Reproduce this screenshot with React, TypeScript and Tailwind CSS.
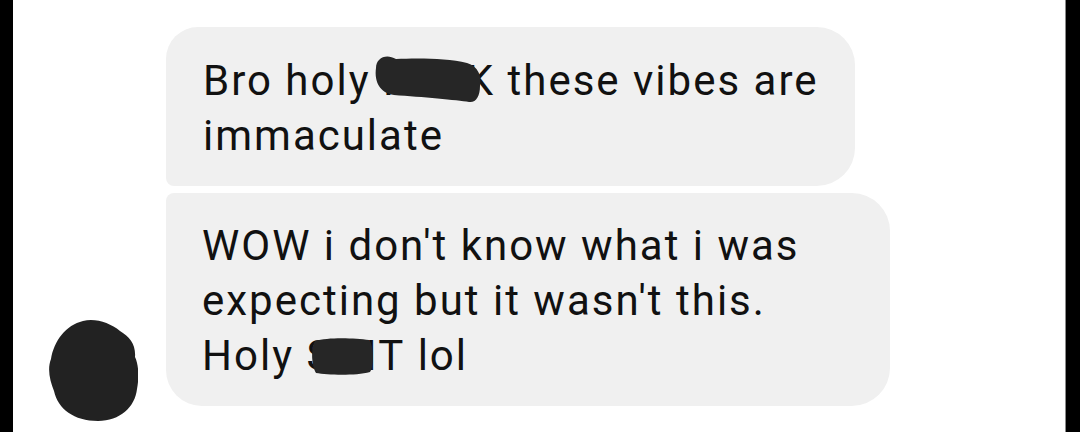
import React from 'react';

function Censor({ word, variant }: { word: string; variant: 'long' | 'short' }) {
  return (
    <span className="relative inline-block">
      {word}
      {variant === 'long' ? (
        <svg
          className="absolute left-[-11px] top-[1px] overflow-visible"
          width="112"
          height="50"
          viewBox="0 0 112 50"
        >
          <path
            d="M4,14 C4,4 14,-1 24,5 C45,4 75,4 95,9 C106,12 110,22 108,32 C108,42 104,49 97,48 C85,46 50,43 22,41 C8,39 2,28 4,14 Z"
            fill="#262626"
          />
        </svg>
      ) : (
        <svg
          className="absolute left-[5px] top-[9px] overflow-visible"
          width="63"
          height="38"
          viewBox="0 0 63 38"
        >
          <path
            d="M4,4 C17,0 44,1 58,3 C63,8 63,30 59,35 C44,39 17,38 5,36 C0,28 0,10 4,4 Z"
            fill="#262626"
          />
        </svg>
      )}
    </span>
  );
}

function Avatar() {
  return (
    <svg width="90" height="103" viewBox="0 0 90 103">
      <path
        d="M35,2 C48,-1 62,4 72,12 C82,18 88,26 87,38 C91,46 91,60 89,70 C87,88 72,102 50,102 C26,102 10,90 6,72 C2,62 -1,50 3,40 C6,22 18,6 35,2 Z"
        fill="#222222"
      />
    </svg>
  );
}

export default function App() {
  return (
    <div className="flex h-[432px] w-[1080px] overflow-hidden bg-white font-['Roboto',sans-serif] text-[42px] leading-[55px] tracking-[2px] text-[#111]">
      {/* left edge */}
      <div className="w-[13px] shrink-0 bg-black" />

      <div className="flex flex-1">
        {/* avatar */}
        <div className="flex w-[153px] shrink-0 items-end pb-[10px] pl-[35px]">
          <Avatar />
        </div>

        {/* messages */}
        <div className="flex flex-col gap-[7px] pt-[27px]">
          <div className="w-[689px] whitespace-nowrap rounded-tl-[32px] rounded-tr-[38px] rounded-br-[38px] rounded-bl-[8px] bg-[#f0f0f0] pb-[23px] pl-[37px] pt-[26px]">
            Bro holy <Censor word="FUCK" variant="long" /> these vibes are
            <br />
            immaculate
          </div>
          <div className="w-[724px] whitespace-nowrap rounded-tl-[8px] rounded-tr-[38px] rounded-br-[38px] rounded-bl-[36px] bg-[#f0f0f0] pb-[23px] pl-[36px] pt-[25px]">
            WOW i don't know what i was
            <br />
            expecting but it wasn't this.
            <br />
            Holy <Censor word="SHIT" variant="short" /> lol
          </div>
        </div>
      </div>

      {/* right edge */}
      <div className="w-[15px] shrink-0 border-l border-[#8a8a8a] bg-black" />
    </div>
  );
}
